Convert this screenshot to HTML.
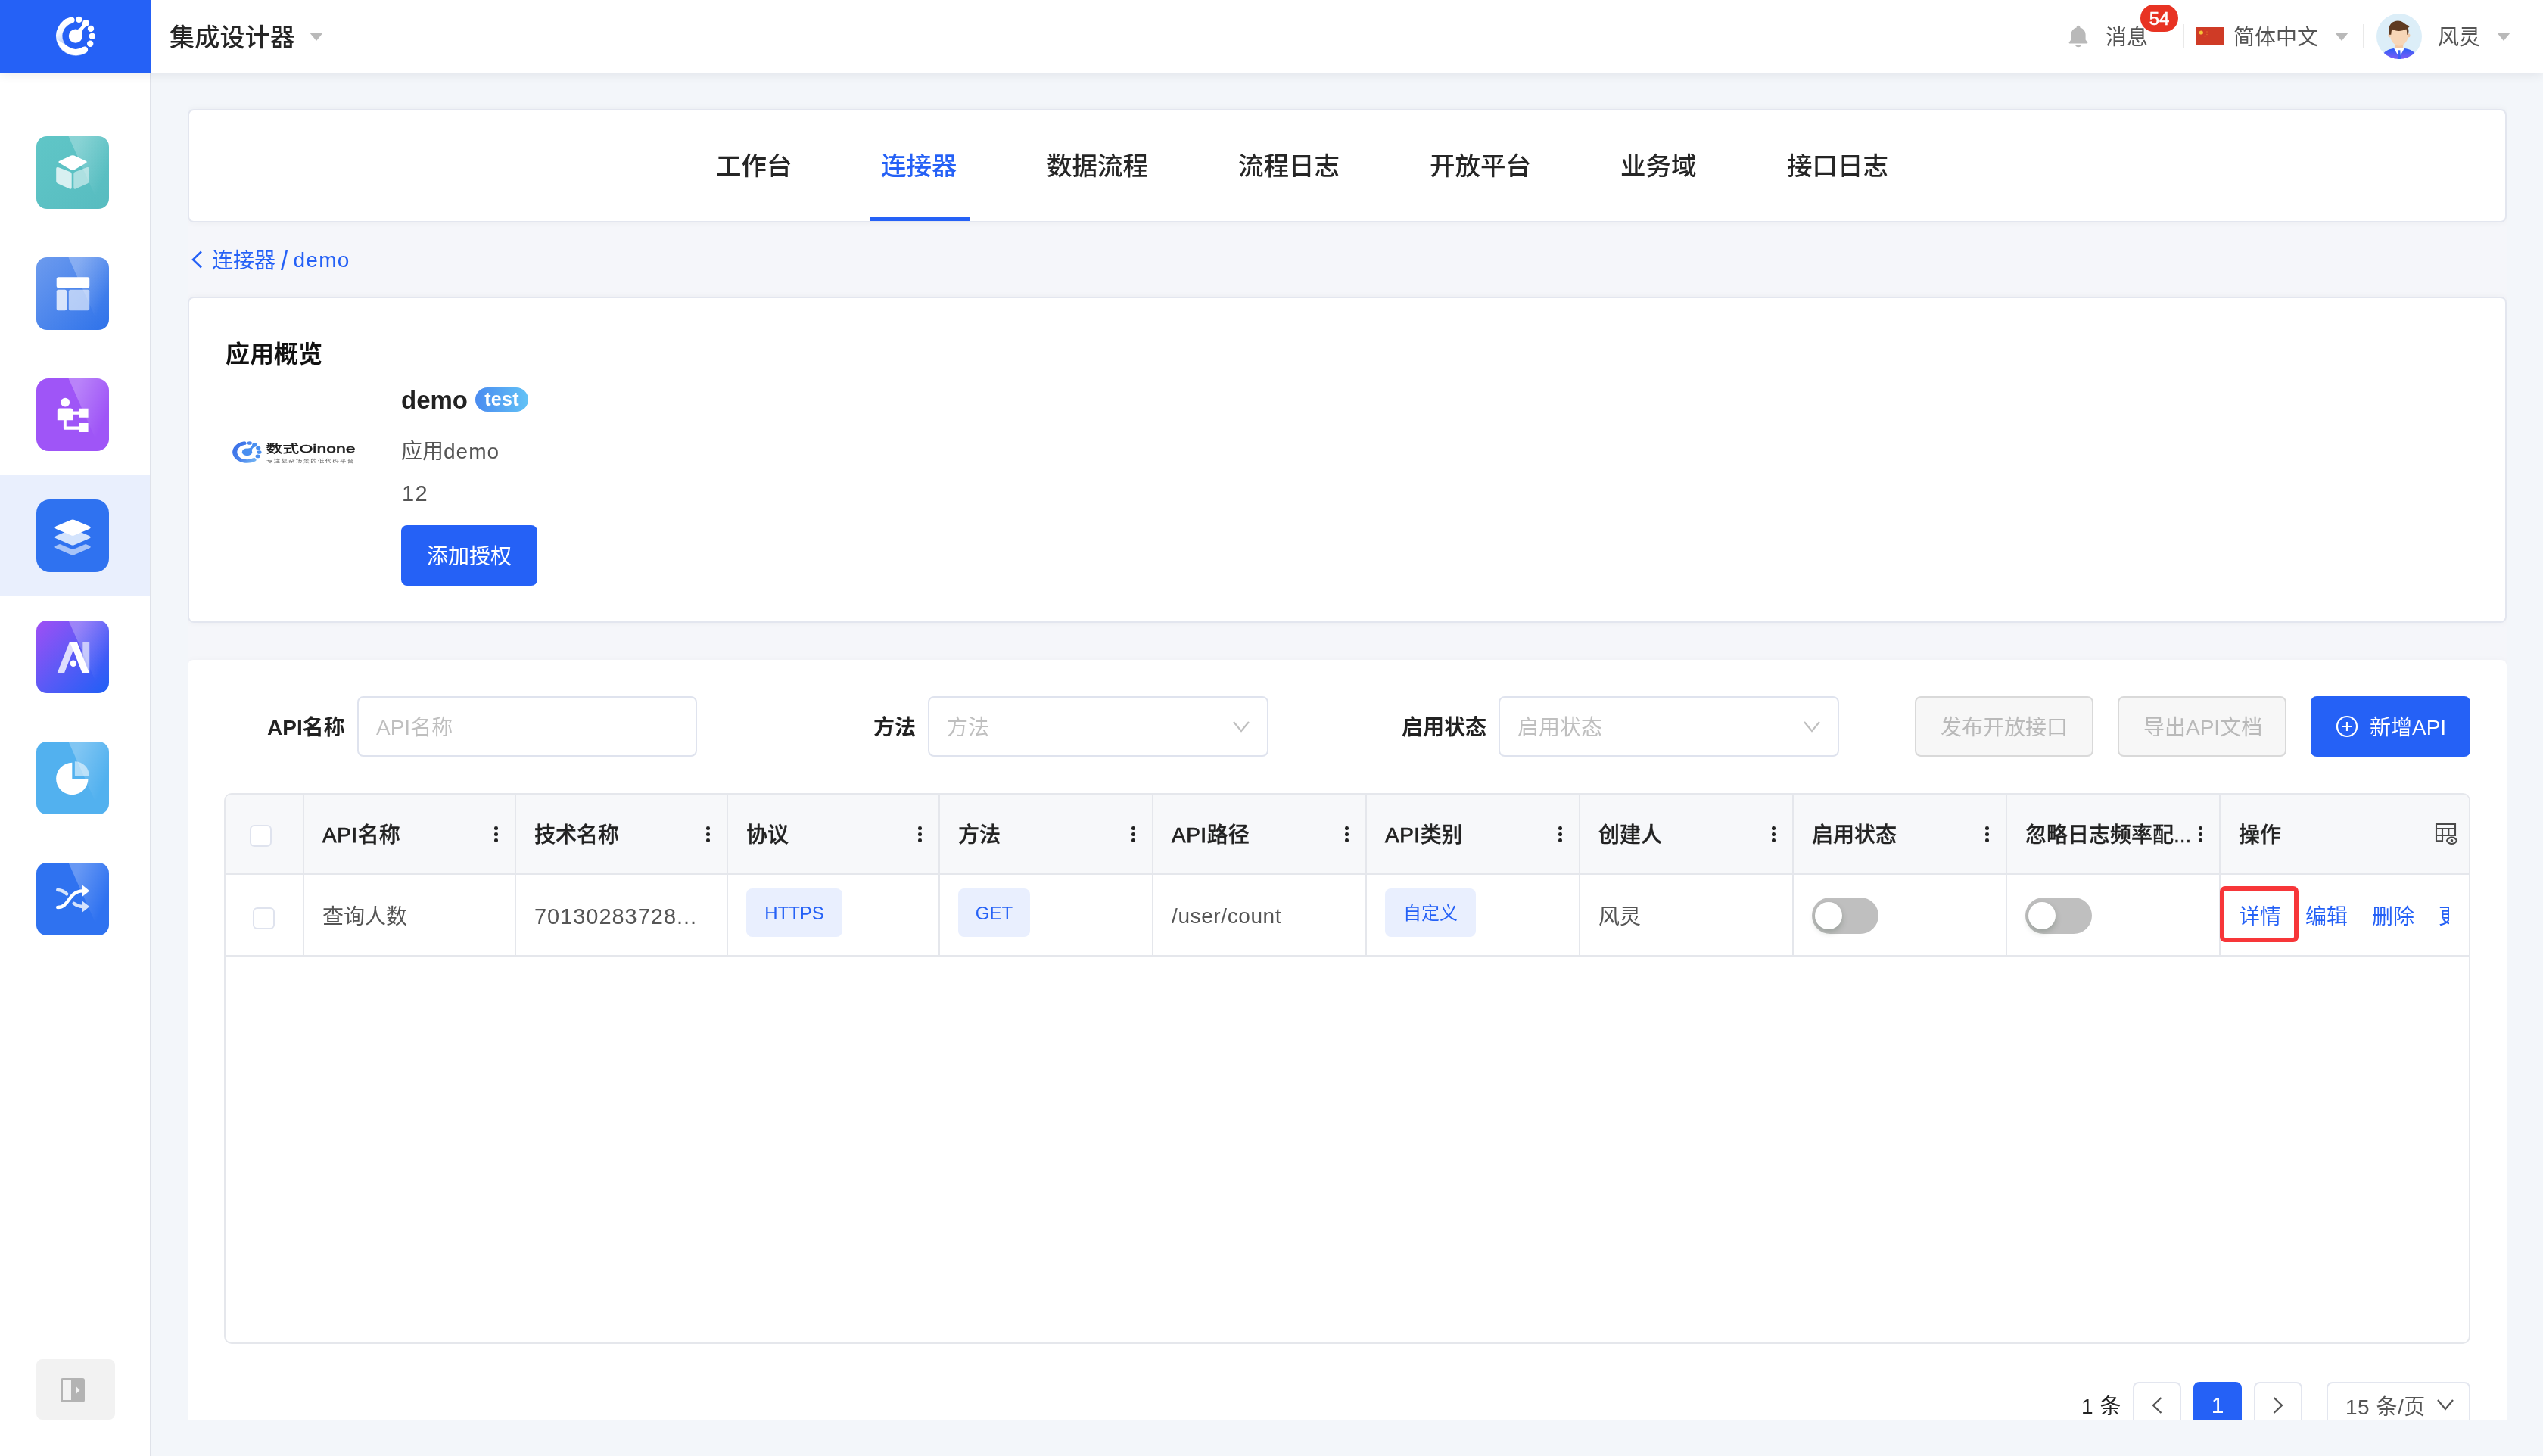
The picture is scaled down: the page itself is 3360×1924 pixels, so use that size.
<!DOCTYPE html>
<html lang="zh-CN">
<head>
<meta charset="utf-8">
<title>集成设计器</title>
<style>
*{box-sizing:border-box;margin:0;padding:0}
html,body{width:3360px;height:1924px;overflow:hidden;background:#f3f6fa}
body{font-family:"Liberation Sans","Noto Sans CJK SC",sans-serif;color:#555;font-size:28px;line-height:1;position:relative}
div,svg{will-change:transform}
.abs{position:absolute}
.t{position:absolute;white-space:nowrap;line-height:40px;height:40px}
/* header */
#header{position:absolute;left:0;top:0;width:3360px;height:96px;background:#fff;box-shadow:0 2px 14px rgba(10,15,30,.085);z-index:5}
#logo{position:absolute;left:0;top:0;width:200px;height:96px;background:#2561f6}
#sidebar{position:absolute;left:0;top:96px;width:200px;height:1828px;background:#fff;border-right:2px solid #dfe2e9;z-index:4}
.ico{position:absolute;left:48px;width:96px;height:96px;border-radius:14px;overflow:hidden}
.ico svg{display:block}
.tri{position:absolute;width:0;height:0;border-left:9px solid transparent;border-right:9px solid transparent;border-top:11px solid #b9b9b9}
.vdiv{position:absolute;width:2px;height:32px;top:32px;background:#e9e9e9}
/* cards */
.card{position:absolute;background:#fff;border:2px solid #e3e6ef;border-radius:8px;box-shadow:0 0 10px rgba(10,15,50,.045);clip-path:inset(-14px 0 -14px 0)}
.tab{position:absolute;top:198px;margin-left:-1px;height:44px;line-height:44px;font-size:33.500px;letter-spacing:0;font-weight:500;color:#262626;white-space:nowrap}
.lbl{font-weight:700;color:#222}
.inp{position:absolute;top:920px;height:80px;border:2px solid #dfe3ee;border-radius:8px;background:#fff}
.ph{position:absolute;left:23px;top:20px;line-height:40px;color:#bfbfbf;white-space:nowrap}
.btn{position:absolute;top:920px;height:80px;border-radius:8px;white-space:nowrap;line-height:40px}
.btn.dis{background:#f7f7f7;border:2px solid #d9d9d9;color:#b9b9b9}
.th{position:absolute;top:1084px;line-height:40px;font-weight:500;color:#222;white-space:nowrap;-webkit-text-stroke:.35px #222}
.td{position:absolute;top:1192px;line-height:40px;color:#555;white-space:nowrap}
.vline{position:absolute;top:1050px;width:2px;height:212px;background:#e5e7ec}
.dots{position:absolute;top:1092px;width:5px;height:21px}
.dots i{position:absolute;left:.2px;width:4.600px;height:4.600px;border-radius:50%;background:#222}
.tag{position:absolute;top:1174px;height:64px;border-radius:8px;background:#e9effe;color:#2561f6;font-size:24px;line-height:66px;text-align:center}
.sw{position:absolute;top:1186px;width:88px;height:48px;border-radius:24px;background:#bfbfbf}
.sw i{position:absolute;left:4px;top:6px;width:36px;height:36px;border-radius:50%;background:#fff;box-shadow:0 4px 8px rgba(0,35,11,.2)}
.th b{font-weight:400;letter-spacing:.5px;-webkit-text-stroke:.75px #222}
.cb{position:absolute;width:29px;height:29px;border:2px solid #dfe3ee;border-radius:6px;background:#fff}
.lnk{position:absolute;top:1192px;line-height:40px;color:#2561f6;white-space:nowrap}
.pg{position:absolute;top:1826px;width:64px;height:64px;border:2px solid #e3e6ef;border-radius:8px;background:#fff}
</style>
</head>
<body>
<div id="header">
  <div id="logo">
    <svg width="200" height="96" viewBox="0 0 200 96">
      <defs>
        <linearGradient id="lg1" gradientUnits="userSpaceOnUse" x1="79" y1="34" x2="95" y2="63"><stop offset="0" stop-color="#fff"/><stop offset=".25" stop-color="#f3f7fe"/><stop offset="1" stop-color="#8caff8"/></linearGradient>
      </defs>
      <path d="M94.5 26.6 A21.800 21.800 0 1 0 112 65.900" fill="none" stroke="url(#lg1)" stroke-width="8.400" stroke-linecap="round"/>
      <path d="M75.100 52 A25.700 25.700 0 0 0 114.200 69.150 A4.200 4.200 0 0 0 109.620 62.100 A17.400 17.400 0 0 1 90 61.600 Z" fill="#fff"/>
      <circle cx="99.9" cy="47.6" r="9.1" fill="#fff"/>
      <path d="M101 39.5 C107 38 108.5 33 110 29 L116.5 33.5 C111 36 108 40 108.7 45 Z" fill="#fff"/>
      <circle cx="113.5" cy="30.4" r="4.4" fill="#fff"/>
      <circle cx="104.4" cy="25.9" r="4.2" fill="#fff"/>
      <circle cx="120" cy="37.9" r="4.2" fill="#fff"/>
      <circle cx="121.8" cy="47.8" r="4.2" fill="#fff"/>
      <circle cx="119.2" cy="57.8" r="4.2" fill="#fff"/>
    </svg>
  </div>
  <div class="t" style="left:224px;top:30px;font-size:33px;font-weight:500;color:#262626;letter-spacing:.2px">集成设计器</div>
  <div class="tri" style="left:409px;top:43px"></div>

  <svg class="abs" style="left:2732px;top:33px" width="28" height="30" viewBox="0 0 28 30"><path d="M14 .8c1.3 0 2.3 1 2.3 2.2v.5c4.300 1 7.300 4.800 7.300 9.300v6.700l2.600 3.600c.4.600 0 1.500-.8 1.500H2.600c-.8 0-1.200-.9-.8-1.500l2.600-3.600v-6.700c0-4.500 3-8.300 7.300-9.300V3c0-1.200 1-2.200 2.300-2.200z" fill="#b9b9b9"/><path d="M9.800 26.200h8.400c-.5 1.800-2.200 3-4.200 3s-3.700-1.200-4.200-3z" fill="#b9b9b9"/></svg>
  <div class="t" style="left:2782px;top:30px">消息</div>
  <div class="abs" style="left:2828px;top:6px;width:50px;height:36px;border-radius:18px;background:#e83323;color:#fff;font-size:24px;line-height:37px;text-align:center;font-weight:500;-webkit-text-stroke:.5px #fff">54</div>
  <div class="vdiv" style="left:2884px"></div>
  <svg class="abs" style="left:2902px;top:36px" width="36" height="24" viewBox="0 0 36 24"><rect width="36" height="24" fill="#cf3b26"/><circle cx="6.300" cy="7" r="2.600" fill="#f6c437"/><circle cx="11.500" cy="3" r=".8" fill="#dc6f2a"/><circle cx="14" cy="6" r=".8" fill="#dc6f2a"/><circle cx="14" cy="9.500" r=".8" fill="#dc6f2a"/><circle cx="11.500" cy="12.500" r=".8" fill="#dc6f2a"/></svg>
  <div class="t" style="left:2951px;top:30px">简体中文</div>
  <div class="tri" style="left:3085px;top:43px"></div>
  <div class="vdiv" style="left:3122px"></div>
  <svg class="abs" style="left:3140px;top:18px" width="60" height="60" viewBox="0 0 60 60">
    <defs><clipPath id="avc"><circle cx="30" cy="30" r="30"/></clipPath>
    <linearGradient id="suit" x1="0" y1="0" x2="0" y2="1"><stop offset="0" stop-color="#2b5ef6"/><stop offset="1" stop-color="#8b5cf6"/></linearGradient></defs>
    <g clip-path="url(#avc)">
      <rect width="60" height="60" fill="#dceef8"/>
      <path d="M9 53 C12 48.500 18 46.500 23 46 L37 46 C42 46.500 48 48.500 51 53 L51 62 L9 62 Z" fill="url(#suit)"/>
      <path d="M23 45.500 L37 45.500 L30 58 Z" fill="#fff"/>
      <path d="M28.800 47.500 L31.200 47.500 L32.300 60 L27.700 60 Z" fill="#3a62f5"/>
      <rect x="24.800" y="38" width="10.400" height="7.600" fill="#f3c9a6"/>
      <path d="M25 45 L30 47 L35 45 L35 46.500 L30 48.500 L25 46.500Z" fill="#fff"/>
      <ellipse cx="17.300" cy="28.800" rx="1.800" ry="2.600" fill="#f0c9a8"/><ellipse cx="42.700" cy="28.800" rx="1.800" ry="2.600" fill="#f0c9a8"/>
      <path d="M18.300 20 C18.300 14 41.700 14 41.700 20 L41.700 30 C41.700 36 36 42.600 30 42.600 C24 42.600 18.300 36 18.300 30 Z" fill="#f7d6b7"/>
      <path d="M17 27.800 C15.800 21 16.500 16 19.500 13 C23 9 31 8.200 35 11.500 C38 14 41 15.800 44.300 16.300 C43.300 17.500 42.500 18.200 41.800 19 C42.800 22 42.600 25 41.600 27.800 L40.300 27.800 C40.300 24.500 40 22 39.300 20.500 C33 24 25 23.500 20.500 20.500 C19.800 22.500 19.500 25 19.300 27.800 Z" fill="#5f3b21"/>
    </g>
  </svg>
  <div class="t" style="left:3221px;top:30px">风灵</div>
  <div class="tri" style="left:3299px;top:43px"></div>
</div>
<div id="sidebar">
  <svg width="0" height="0" style="position:absolute"><defs>
    <linearGradient id="shine" gradientUnits="userSpaceOnUse" x1="50" y1="20" x2="96" y2="40"><stop offset="0" stop-color="#fff" stop-opacity=".27"/><stop offset="1" stop-color="#fff" stop-opacity="0"/></linearGradient>
    <linearGradient id="g2" x1="0" y1="0" x2="1" y2="1"><stop offset="0" stop-color="#6d9bee"/><stop offset="1" stop-color="#2e72ea"/></linearGradient>
    <linearGradient id="g5" x1="0" y1="0" x2="1" y2="1"><stop offset="0" stop-color="#a04ff5"/><stop offset=".5" stop-color="#5b5af6"/><stop offset="1" stop-color="#1f5ff6"/></linearGradient>
    <linearGradient id="g1" x1="0" y1="0" x2="1" y2="1"><stop offset="0" stop-color="#60c6c7"/><stop offset="1" stop-color="#57bcc0"/></linearGradient>
  </defs></svg>
  <div class="abs" style="left:0;top:532px;width:198px;height:160px;background:#e9effd"></div>

  <div class="ico" style="top:84px"><svg width="96" height="96" viewBox="0 0 96 96"><rect width="96" height="96" fill="url(#g1)"/><path d="M42.500 0H96V96H85.500Z" fill="url(#shine)"/>
    <path d="M46 25.600 Q48 24.700 50 25.600 L65.500 32.800 Q67.800 34 65.500 35.400 L50 44.400 Q48 45.500 46 44.400 L30.500 35.400 Q28.200 34 30.500 32.800 Z" fill="#fff"/>
    <path d="M26.200 43 Q26.200 40.200 28.800 41.100 L45 47.300 Q46.700 48 46.700 50 L46.700 67.500 Q46.700 70.600 44 69.400 L28 62.200 Q26.200 61.400 26.200 59.500 Z" fill="#fff" fill-opacity=".76"/>
    <path d="M69.800 43 Q69.800 40.200 67.200 41.100 L51 47.300 Q49.300 48 49.300 50 L49.300 67.500 Q49.300 70.600 52 69.400 L68 62.200 Q69.800 61.400 69.800 59.500 Z" fill="#fff" fill-opacity=".5"/>
  </svg></div>

  <div class="ico" style="top:244px"><svg width="96" height="96" viewBox="0 0 96 96"><rect width="96" height="96" fill="url(#g2)"/><path d="M42.500 0H96V96H85.500Z" fill="url(#shine)"/>
    <rect x="26.700" y="26.300" width="43.500" height="13.900" rx="2.500" fill="#fff"/>
    <rect x="26.700" y="42.800" width="13.500" height="27.400" rx="2.500" fill="#fff" fill-opacity=".78"/>
    <rect x="42.800" y="42.800" width="27.400" height="27.400" rx="2.500" fill="#fff" fill-opacity=".6"/>
  </svg></div>

  <div class="ico" style="top:404px;border-radius:16px"><svg width="96" height="96" viewBox="0 0 96 96"><rect width="96" height="96" fill="#9f55f7"/><path d="M42.500 0H96V96H85.500Z" fill="url(#shine)"/>
    <circle cx="38.200" cy="31.700" r="5.900" fill="#fff"/>
    <path d="M27.800 42.400 Q27.800 39.400 30.800 39.400 L45.200 39.400 Q48.200 39.400 48.200 42.400 L48.200 43.600 L56.300 43.600 L56.300 39.800 L68.600 39.800 L68.600 51.700 L56.300 51.700 L56.300 47.800 L48.200 47.800 L48.200 55.200 L39.800 55.200 L39.800 63.600 L56.300 63.600 L56.300 59 L68.600 59 L68.600 70.900 L56.300 70.900 L56.300 67.800 L37.400 67.800 Q35.900 67.800 35.900 66.300 L35.900 55.200 L27.800 55.200 Z" fill="#fff"/>
  </svg></div>

  <div class="ico" style="top:564px;border-radius:18px"><svg width="96" height="96" viewBox="0 0 96 96"><rect width="96" height="96" fill="#2f72f0"/>
    <path transform="translate(0,25.700)" d="M45.800 27 Q48.100 26 50.400 27 L70 35.300 Q73.500 37.100 70 38.900 L50.400 47.300 Q48.100 48.300 45.800 47.300 L26.200 38.900 Q22.700 37.100 26.200 35.300 Z" fill="#a6c3f8"/>
    <path transform="translate(0,17.700)" d="M45.800 27 Q48.100 26 50.400 27 L70 35.300 Q73.500 37.100 70 38.900 L50.400 47.300 Q48.100 48.300 45.800 47.300 L26.200 38.900 Q22.700 37.100 26.200 35.300 Z" fill="#2f72f0" stroke="#2f72f0" stroke-width=".6"/>
    <path transform="translate(0,12.700)" d="M45.800 27 Q48.100 26 50.400 27 L70 35.300 Q73.500 37.100 70 38.900 L50.400 47.300 Q48.100 48.300 45.800 47.300 L26.200 38.900 Q22.700 37.100 26.200 35.300 Z" fill="#d3e3fc"/>
    <path d="M45.800 27 Q48.100 26 50.400 27 L70 35.300 Q73.500 37.100 70 38.900 L50.400 47.300 Q48.100 48.300 45.800 47.300 L26.200 38.900 Q22.700 37.100 26.200 35.300 Z" fill="#fff"/>
  </svg></div>

  <div class="ico" style="top:724px"><svg width="96" height="96" viewBox="0 0 96 96"><rect width="96" height="96" fill="url(#g5)"/><path d="M42.500 0H96V96H85.500Z" fill="url(#shine)"/>
    <rect x="61.300" y="29" width="8.900" height="40" fill="#fff" fill-opacity=".62"/>
    <path d="M43.600 29 L52.800 29 L37.100 69 L27.800 69 Z" fill="#fff" fill-opacity=".8"/>
    <path d="M44.200 29 L54 29 L69.800 69 L60.500 69 L48.500 38.500 Z" fill="#fff"/>
    <circle cx="48.800" cy="56.700" r="4.200" fill="#fff"/>
  </svg></div>

  <div class="ico" style="top:884px"><svg width="96" height="96" viewBox="0 0 96 96"><rect width="96" height="96" fill="#52b1ef"/><path d="M42.500 0H96V96H85.500Z" fill="url(#shine)"/>
    <path d="M47.300 27.800 A21.200 21.200 0 1 0 68.500 49 L47.300 49 Z" fill="#fff"/>
    <path d="M50.900 26.300 A18.900 18.900 0 0 1 69.800 45.200 L50.900 45.200 Z" fill="#fff" fill-opacity=".55"/>
  </svg></div>

  <div class="ico" style="top:1044px"><svg width="96" height="96" viewBox="0 0 96 96"><rect width="96" height="96" fill="#2f72f0"/><path d="M42.500 0H96V96H85.500Z" fill="url(#shine)"/>
    <path d="M28.200 36 C33 36 37 38.200 40.200 41.400" fill="none" stroke="#fff" stroke-opacity=".8" stroke-width="4.400" stroke-linecap="round"/>
    <g opacity=".8"><path d="M49.600 53.800 C52.500 56 56 57.800 61 58" fill="none" stroke="#fff" stroke-width="4.400" stroke-linecap="round"/>
    <path d="M60.200 50.200 L70.300 57.900 L60.200 66 Z" fill="#fff"/></g>
    <path d="M28.200 59 C44 59 42 38 61 37.400" fill="none" stroke="#fff" stroke-width="4.400" stroke-linecap="round"/>
    <path d="M60.200 29 L70.300 37.200 L60.200 45.300 Z" fill="#fff"/>
  </svg></div>

  <div class="abs" style="left:48px;top:1700px;width:104px;height:80px;border-radius:8px;background:#f2f2f2"></div>
  <svg class="abs" style="left:80px;top:1725px" width="32" height="32" viewBox="0 0 32 32"><rect x="0" y="0" width="32" height="32" rx="3" fill="#b3b3b3"/><rect x="3" y="3" width="11" height="26" fill="#f2f2f2"/><path d="M20 10.500 L25.500 16 L20 21.500 Z" fill="#f2f2f2"/></svg>
</div>
<div class="abs" style="left:248px;top:150px;width:3064px;height:1726px;background:#f5f6fa"></div>
<!-- nav card -->
<div class="card" style="left:248px;top:144px;width:3064px;height:150px"></div>
<div class="tab" style="left:947px">工作台</div>
<div class="tab" style="left:1165px;color:#2561f6">连接器</div>
<div class="tab" style="left:1384px">数据流程</div>
<div class="tab" style="left:1637px">流程日志</div>
<div class="tab" style="left:1890px">开放平台</div>
<div class="tab" style="left:2142px">业务域</div>
<div class="tab" style="left:2362px">接口日志</div>
<div class="abs" style="left:1149px;top:287px;width:132px;height:5px;background:#2561f6"></div>

<!-- breadcrumb -->
<svg class="abs" style="left:250px;top:328px" width="20" height="30" viewBox="0 0 20 30"><path d="M16 4.500 L5 15 L16 25.500" fill="none" stroke="#2561f6" stroke-width="2.600"/></svg>
<div class="t" style="left:280px;top:325px;color:#2561f6">连接器<span style="position:absolute;left:91px;top:0;line-height:40px;transform:scale(1.200,1.300);transform-origin:0 50%">/</span><span style="position:absolute;left:107.500px;top:-1px;letter-spacing:1.300px">demo</span></div>

<!-- overview card -->
<div class="card" style="left:248px;top:392px;width:3064px;height:431px"></div>
<div class="t" style="left:298px;top:448px;font-size:32px;font-weight:700;color:#111">应用概览</div>
<div class="t" style="left:530px;top:509px;font-size:33px;font-weight:700;color:#222;letter-spacing:0">demo</div>
<div class="abs" style="left:628px;top:512px;width:70px;height:32px;border-radius:16px;background:linear-gradient(90deg,#4a8bf0,#62c2f6);color:#fff;font-size:25px;font-weight:700;line-height:31px;text-align:center;letter-spacing:.3px">test</div>
<svg class="abs" style="left:300px;top:576px" width="180" height="44" viewBox="0 0 180 44">
  <defs><linearGradient id="lg2" x1="0" y1="0" x2="1" y2="1"><stop offset="0" stop-color="#3a6fe8"/><stop offset=".6" stop-color="#4a83ec"/><stop offset="1" stop-color="#6fb0f3"/></linearGradient></defs>
  <g transform="translate(7.600,7.400) scale(.73,.545)">
    <path d="M20.500 4.200 A22.200 22.200 0 1 0 38.200 44.200" fill="none" stroke="url(#lg2)" stroke-width="8.400" stroke-linecap="round"/>
    <circle cx="25.900" cy="25.600" r="9.100" fill="#4a8ff0"/>
    <path d="M27 17.500 C33 16 34.500 11 36 7 L42.500 11.500 C37 14 34 18 34.700 23 Z" fill="#4a8ff0"/>
    <circle cx="39.500" cy="8.400" r="4.400" fill="#4a8ff0"/>
    <circle cx="30.400" cy="3.900" r="4.200" fill="#4a86ef"/>
    <circle cx="46" cy="15.900" r="4.200" fill="#4a8ff0"/>
    <circle cx="47.800" cy="25.800" r="4.200" fill="#4a8ff0"/>
    <circle cx="45.200" cy="35.800" r="4.200" fill="#4a8ff0"/>
  </g>
  <text x="0" y="0" transform="translate(51.500,22) scale(1.500,1)" font-size="14.500" font-weight="500" stroke="#1c1c1c" stroke-width=".25" fill="#1c1c1c" font-family="'Liberation Sans','Noto Sans CJK SC',sans-serif">数式</text>
  <text x="0" y="0" transform="translate(95.500,22) scale(1.480,1)" font-size="15.500" fill="#1c1c1c" stroke="#1c1c1c" stroke-width=".45" font-family="'Liberation Sans','Noto Sans CJK SC',sans-serif">Oinone</text>
  <text x="0" y="0" transform="translate(52,34.600) scale(1.400,1)" font-size="6" fill="#666" letter-spacing=".95" font-family="'Liberation Sans','Noto Sans CJK SC',sans-serif">专注复杂场景的低代码平台</text>
</svg>
<div class="t" style="left:530px;top:577px">应用<span style="letter-spacing:1px">demo</span></div>
<div class="t" style="left:531px;top:632px;font-size:29px;letter-spacing:1.300px">12</div>
<div class="abs" style="left:530px;top:694px;width:180px;height:80px;border-radius:8px;background:#2561f6;color:#fff;line-height:83px;text-align:center">添加授权</div>
<!-- table card -->
<div class="abs" style="left:248px;top:872px;width:3064px;height:1004px;background:#fff;border-radius:8px 8px 0 0;box-shadow:0 0 10px rgba(10,15,50,.03);clip-path:inset(-14px 0 0 0)"></div>
<div class="t lbl" style="left:353px;top:942px">API名称</div>
<div class="inp" style="left:472px;width:449px"><div class="ph">API名称</div></div>
<div class="t lbl" style="left:1154px;top:942px">方法</div>
<div class="inp" style="left:1226px;width:450px"><div class="ph">方法</div>
  <svg class="abs" style="left:399px;top:28px" width="26" height="20" viewBox="0 0 26 20"><path d="M3 4 L13 16 L23 4" fill="none" stroke="#bfbfbf" stroke-width="2.200"/></svg></div>
<div class="t lbl" style="left:1852px;top:942px">启用状态</div>
<div class="inp" style="left:1980px;width:450px"><div class="ph">启用状态</div>
  <svg class="abs" style="left:399px;top:28px" width="26" height="20" viewBox="0 0 26 20"><path d="M3 4 L13 16 L23 4" fill="none" stroke="#bfbfbf" stroke-width="2.200"/></svg></div>
<div class="btn dis" style="left:2530px;width:236px;padding:20px 0 0 32px">发布开放接口</div>
<div class="btn dis" style="left:2798px;width:223px;padding:20px 0 0 32px">导出API文档</div>
<div class="btn" style="left:3053px;width:211px;background:#2561f6;color:#fff;padding:22px 0 0 78px">新增API</div>
<svg class="abs" style="left:3085px;top:944px" width="32" height="32" viewBox="0 0 32 32"><circle cx="16" cy="16" r="13" fill="none" stroke="#fff" stroke-width="2.200"/><path d="M10 16H22M16 10V22" stroke="#fff" stroke-width="2.200"/></svg>

<!-- table -->
<div class="abs" style="left:296px;top:1048px;width:2968px;height:728px;border:2px solid #e5e7ec;border-radius:10px;background:#fff;overflow:hidden">
  <div class="abs" style="left:0;top:0;width:2964px;height:104px;background:#f7f8fa"></div>
  <div class="abs" style="left:0;top:104px;width:2964px;height:2px;background:#e5e7ec"></div>
  <div class="abs" style="left:0;top:212px;width:2964px;height:2px;background:#e5e7ec"></div>
</div>
<div class="vline" style="left:400px"></div>
<div class="vline" style="left:680px"></div>
<div class="vline" style="left:960px"></div>
<div class="vline" style="left:1240px"></div>
<div class="vline" style="left:1522px"></div>
<div class="vline" style="left:1804px"></div>
<div class="vline" style="left:2086px"></div>
<div class="vline" style="left:2368px"></div>
<div class="vline" style="left:2650px"></div>
<div class="vline" style="left:2932px"></div>

<div class="cb" style="left:330px;top:1090px"></div>
<div class="cb" style="left:334px;top:1199px"></div>

<div class="th" style="left:426px"><b>API</b>名称</div>
<div class="th" style="left:706px">技术名称</div>
<div class="th" style="left:986px">协议</div>
<div class="th" style="left:1266px">方法</div>
<div class="th" style="left:1548px"><b>API</b>路径</div>
<div class="th" style="left:1830px"><b>API</b>类别</div>
<div class="th" style="left:2112px">创建人</div>
<div class="th" style="left:2394px">启用状态</div>
<div class="th" style="left:2676px">忽略日志频率配...</div>
<div class="th" style="left:2958px">操作</div>

<div class="dots" style="left:653px"><i style="top:0"></i><i style="top:8px"></i><i style="top:16px"></i></div>
<div class="dots" style="left:933px"><i style="top:0"></i><i style="top:8px"></i><i style="top:16px"></i></div>
<div class="dots" style="left:1213px"><i style="top:0"></i><i style="top:8px"></i><i style="top:16px"></i></div>
<div class="dots" style="left:1495px"><i style="top:0"></i><i style="top:8px"></i><i style="top:16px"></i></div>
<div class="dots" style="left:1777px"><i style="top:0"></i><i style="top:8px"></i><i style="top:16px"></i></div>
<div class="dots" style="left:2059px"><i style="top:0"></i><i style="top:8px"></i><i style="top:16px"></i></div>
<div class="dots" style="left:2341px"><i style="top:0"></i><i style="top:8px"></i><i style="top:16px"></i></div>
<div class="dots" style="left:2623px"><i style="top:0"></i><i style="top:8px"></i><i style="top:16px"></i></div>
<div class="dots" style="left:2905px"><i style="top:0"></i><i style="top:8px"></i><i style="top:16px"></i></div>

<svg class="abs" style="left:3217px;top:1087px" width="31" height="30" viewBox="0 0 31 30"><g fill="none" stroke="#4a4a4a" stroke-width="2.100"><path d="M2 2H27V17H10V24.400H2Z"/><path d="M2 8H27M2 17H10M10 8V17M18.300 8V17"/><path d="M16 23.800 C18.500 18.200 26.500 18.200 29 23.800 C26.500 29.400 18.500 29.400 16 23.800Z"/></g><circle cx="22.500" cy="23.800" r="1.800" fill="#4a4a4a"/></svg>

<div class="td" style="left:426px">查询人数</div>
<div class="td" style="left:706px;top:1191px;font-size:29px;letter-spacing:.96px">70130283728...</div>
<div class="tag" style="left:986px;width:127px">HTTPS</div>
<div class="tag" style="left:1266px;width:95px">GET</div>
<div class="td" style="left:1548px;top:1191px;letter-spacing:.6px">/user/count</div>
<div class="tag" style="left:1830px;width:120px">自定义</div>
<div class="td" style="left:2112px">风灵</div>
<div class="sw" style="left:2394px"><i></i></div>
<div class="sw" style="left:2676px"><i></i></div>
<div class="abs" style="left:2933px;top:1171px;width:104px;height:74px;border:6px solid #f73639;border-radius:7px"></div>
<div class="lnk" style="left:2958px">详情</div>
<div class="lnk" style="left:3046px">编辑</div>
<div class="lnk" style="left:3134px">删除</div>
<div class="lnk" style="left:3222px;width:13.500px;overflow:hidden">更</div>

<!-- pagination -->
<div class="abs" style="left:248px;top:1776px;width:3064px;height:100px;overflow:hidden">
  <div class="t" style="left:2502px;top:63px;color:#222;letter-spacing:.6px">1 条</div>
  <div class="pg" style="left:2570px;top:50px"><svg class="abs" style="left:20px;top:14px" width="20" height="30" viewBox="0 0 20 30"><path d="M15.500 5 L5 15 L15.500 25" fill="none" stroke="#555" stroke-width="2.300"/></svg></div>
  <div class="pg" style="left:2650px;top:50px;background:#2561f6;border-color:#2561f6;color:#fff;font-weight:500;font-size:30px;text-align:center;line-height:57px">1</div>
  <div class="pg" style="left:2730px;top:50px"><svg class="abs" style="left:20px;top:14px" width="20" height="30" viewBox="0 0 20 30"><path d="M4.500 5 L15 15 L4.500 25" fill="none" stroke="#555" stroke-width="2.300"/></svg></div>
  <div class="pg" style="left:2826px;top:50px;width:190px"><div class="t" style="left:23px;top:12px;letter-spacing:.5px">15 条/页</div><svg class="abs" style="left:142px;top:18px" width="26" height="20" viewBox="0 0 26 20"><path d="M3 4 L13 16 L23 4" fill="none" stroke="#555" stroke-width="2.300"/></svg></div>
</div>

</body>
</html>
